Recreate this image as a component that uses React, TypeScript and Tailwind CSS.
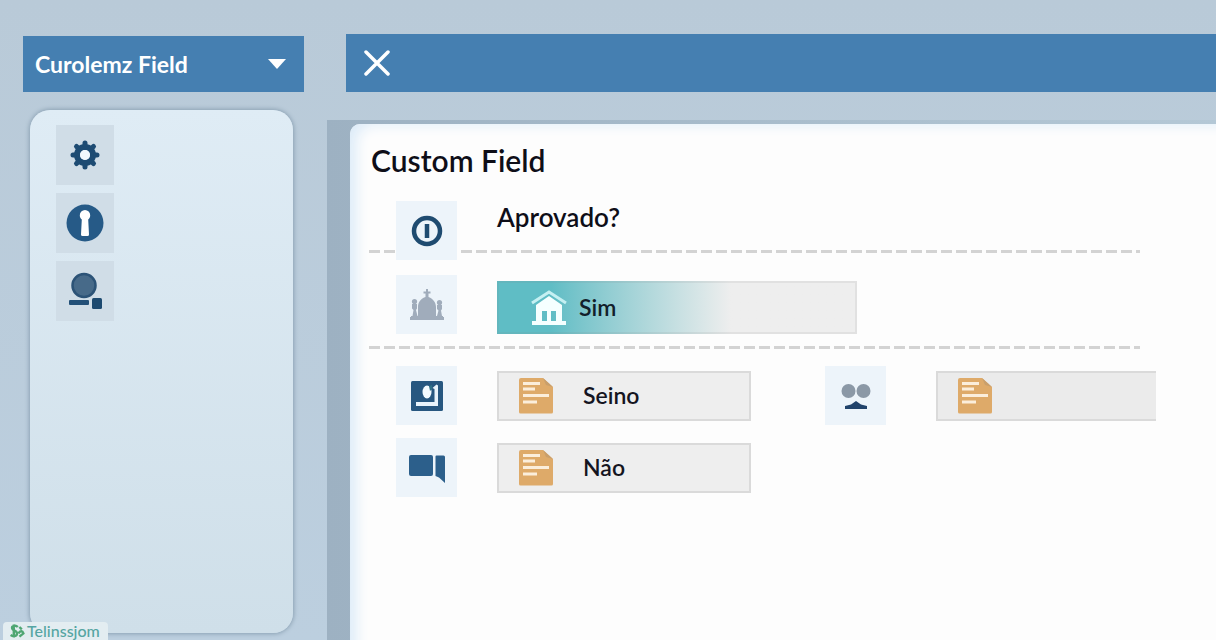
import type { ReactNode } from "react";

interface TileProps {
  label: string;
  children: ReactNode;
}

interface OptionProps {
  label: string;
}

function SideTile({ label, children }: TileProps) {
  return (
    <button
      type="button"
      aria-label={label}
      className="flex h-[60px] w-[58px] items-center justify-center bg-[#d0dde7]"
    >
      {children}
    </button>
  );
}

function Tile({ label, children }: TileProps) {
  return (
    <button
      type="button"
      aria-label={label}
      className="flex h-[59px] w-[61px] shrink-0 items-center justify-center bg-[#edf4fa]"
    >
      {children}
    </button>
  );
}

function Dashes() {
  return (
    <div className="h-[3px] bg-[repeating-linear-gradient(90deg,#d3d3d3_0_11px,transparent_11px_15px)]" />
  );
}

function GearIcon() {
  return (
    <svg viewBox="0 0 30 30" className="size-[30px]" fill="none" stroke="#1d4b73">
      <circle cx="15" cy="15" r="8" strokeWidth="6" />
      <g strokeWidth="5" strokeLinecap="round">
        <path d="M15 4.500V3M15 25.500V27M4.500 15H3M25.500 15H27" />
        <path d="M7.600 7.600 6.500 6.500M22.400 7.600l1.100-1.100M7.600 22.400l-1.100 1.100M22.400 22.400l1.100 1.100" />
      </g>
      <circle cx="15" cy="15" r="5" fill="#f2f8fc" stroke="none" />
    </svg>
  );
}

function KeyholeIcon() {
  return (
    <svg viewBox="0 0 38 38" className="size-[38px]">
      <circle cx="19" cy="19" r="18.500" fill="#265a87" />
      <path
        fill="#fff"
        d="M19 6a5.200 5.200 0 0 0-5.200 5.200c0 2 .8 3.400 2 4.400l-.8 14.900a1.500 1.500 0 0 0 1.500 1.500h5a1.500 1.500 0 0 0 1.500-1.500l-.8-14.900c1.200-1 2-2.400 2-4.400A5.200 5.200 0 0 0 19 6Z"
      />
    </svg>
  );
}

function UserIcon() {
  return (
    <svg viewBox="0 0 34 38" className="h-[38px] w-[34px]">
      <circle cx="16" cy="13.500" r="11.500" fill="#476a89" stroke="#2c5377" strokeWidth="2.500" />
      <rect x="1" y="28" width="20" height="5" rx="1" fill="#235078" />
      <rect x="24" y="26" width="10" height="11" rx="1.500" fill="#1d4a70" />
    </svg>
  );
}

function PowerIcon() {
  return (
    <svg viewBox="0 0 32 32" className="size-8" fill="none" stroke="#1f4b70">
      <circle cx="16" cy="16" r="13" strokeWidth="4.500" />
      <path d="M16 9v14" strokeWidth="4.500" />
    </svg>
  );
}

function DomeIcon() {
  return (
    <svg viewBox="0 0 34 32" className="h-8 w-[34px]" fill="#a0acbb">
      <path d="M16 0h2v2.500h2.500v2H18.500V8c5 2 7.500 6 7.500 10v10H8V18c0-4 2-8 7.500-10V4.500H13.500v-2H16Z" />
      <circle cx="4.500" cy="12.500" r="2.600" />
      <circle cx="29.500" cy="13.500" r="2.600" />
      <path d="M2 15h5v4.500l-1 1.500 1.500 6h3v3H1v-3h1.500l1-6-1.500-1.500ZM27 16h5v4l-1 1.500 1 5.500H33v3h-9v-3h3l1.500-5.500-1.500-1.500Z" />
      <path d="M0 28h34v3H0Z" />
    </svg>
  );
}

function PictureIcon() {
  return (
    <svg viewBox="0 0 32 30" className="h-[30px] w-8">
      <rect width="32" height="30" rx="1.500" fill="#275780" />
      <path d="M5 21h18.500V8l-2-1 4-3.500 1.500 1V25H5Z" fill="#e8f3fb" />
      <ellipse cx="16" cy="11" rx="4.500" ry="6.500" fill="#f4fbff" />
      <path d="m18 5 3-1v4l-2 2Z" fill="#2f7186" />
    </svg>
  );
}

function ChatIcon() {
  return (
    <svg viewBox="0 0 38 30" className="h-[30px] w-[38px]" fill="#2c5f8b">
      <rect x="1" y="2" width="24" height="21" rx="2" />
      <path d="M28.500 2.500h7a1.500 1.500 0 0 1 1.500 1.500v26l-6-5.500-3.500-1.500V3.500a1 1 0 0 1 1-1Z" />
    </svg>
  );
}

function FaceIcon() {
  return (
    <svg viewBox="0 0 30 28" className="h-7 w-[30px]">
      <circle cx="7.500" cy="9" r="7" fill="#8b98a6" />
      <circle cx="22.500" cy="9" r="7" fill="#8b98a6" />
      <path d="M4 27v-3l6-1.500 5-3.500 5 3.500 6 1.500v3Z" fill="#21436b" />
    </svg>
  );
}

function HouseIcon() {
  return (
    <svg viewBox="0 0 36 36" className="size-9 shrink-0">
      <path d="M1 13 18 2l17 11" fill="none" stroke="#c5f0f2" strokeWidth="3" />
      <path
        fill="#f5ffff"
        fillRule="evenodd"
        d="M5 15 18 6l13 9v16h4v4H1v-4h4Zm6 6v10h5V21Zm9 0v10h5V21Z"
      />
    </svg>
  );
}

function NoteIcon() {
  return (
    <svg viewBox="0 0 34 36" className="h-9 w-[34px] shrink-0">
      <path d="M2 0h22l10 9v25a1.500 1.500 0 0 1-1.500 1.500h-31A1.500 1.500 0 0 1 0 34V2a2 2 0 0 1 2-2Z" fill="#deaa69" />
      <path d="m24 0 10 9-7-2Z" fill="#c99f6b" />
      <path d="M4 5.500h17M4 11h12M4 17.500h26M4 24h14" stroke="#fbeedb" strokeWidth="3" />
    </svg>
  );
}

function NoteOption({ label }: OptionProps) {
  return (
    <button
      type="button"
      className="flex h-[50px] w-[254px] items-center gap-[30px] border-2 border-[#dadada] bg-[#eeeeee] pl-5 text-[23px] font-semibold text-[#15151f]"
    >
      <NoteIcon />
      {label}
    </button>
  );
}

export default function App() {
  return (
    <div className="relative flex min-h-screen overflow-hidden bg-linear-to-b from-[#b9cad8] to-[#bccfdf] font-['Lato',sans-serif]">
      <aside className="flex w-[304px] shrink-0 flex-col pt-9 pb-[7px] pl-[23px]">
        <div className="relative h-14">
          <select
            aria-label="Field type"
            className="h-full w-full appearance-none bg-[#457fb1] px-3 text-[23px] font-bold text-white"
          >
            <option>Curolemz Field</option>
          </select>
          <svg viewBox="0 0 18 10" className="pointer-events-none absolute top-[23px] right-[18px] h-[10px] w-[18px]">
            <path d="M0 0h18L9 10Z" fill="#fff" />
          </svg>
        </div>
        <nav className="mt-[18px] mr-[11px] ml-[7px] flex flex-1 flex-col gap-2 rounded-[20px] bg-linear-to-b from-[#dfecf5] to-[#cfdfe9] pt-[15px] pl-[26px] shadow-[0_0_4px_1px_#8ba1b3]">
          <SideTile label="Settings">
            <GearIcon />
          </SideTile>
          <SideTile label="Access">
            <KeyholeIcon />
          </SideTile>
          <SideTile label="User">
            <UserIcon />
          </SideTile>
        </nav>
      </aside>

      <main className="ml-[23px] flex min-w-0 flex-1 flex-col pt-[34px]">
        <header className="ml-[19px] flex h-[58px] items-center bg-[#457fb1] pl-[18px]">
          <button type="button" aria-label="Close">
            <svg viewBox="0 0 26 26" className="size-[26px]" fill="none" stroke="#fff" strokeWidth="3.500" strokeLinecap="round">
              <path d="m2 2 22 22M24 2 2 24" />
            </svg>
          </button>
        </header>

        <div className="mt-7 flex flex-1 flex-col bg-linear-to-r from-[#9db1c2] to-[#b4c8d6] pt-1 pl-[23px]">
          <section className="flex-1 rounded-tl-[10px] bg-[#fdfdfd] pt-4 pl-[19px] shadow-[inset_14px_8px_14px_-8px_#dcebf8]">
            <h1 className="pl-[2px] text-[30px] leading-10 font-semibold text-[#0e0e18]">Custom Field</h1>

            <div className="mt-[21px] mr-[76px] flex">
              <div className="w-[27px] pt-[49px]">
                <Dashes />
              </div>
              <Tile label="Power">
                <PowerIcon />
              </Tile>
              <div className="ml-1 flex-1">
                <h2 className="h-[49px] pl-9 text-[26px] leading-8 font-semibold text-[#0e0e18]">Aprovado?</h2>
                <Dashes />
              </div>
            </div>

            <div className="mt-[15px] flex items-end gap-10 pl-[27px]">
              <Tile label="Institution">
                <DomeIcon />
              </Tile>
              <button
                type="button"
                className="flex h-[53px] w-[360px] items-center gap-3 border-2 border-[#8080801f] bg-linear-to-r from-[#5fbdc5] from-15% to-[#eeeeee] to-65% bg-origin-border pl-8 text-[23px] font-semibold text-[#12202a]"
              >
                <HouseIcon />
                Sim
              </button>
            </div>

            <div className="mt-3 mr-[76px]">
              <Dashes />
            </div>

            <div className="mt-[17px] mr-[60px] flex items-center pl-[27px]">
              <Tile label="Picture">
                <PictureIcon />
              </Tile>
              <div className="mr-[74px] ml-10">
                <NoteOption label="Seino" />
              </div>
              <Tile label="People">
                <FaceIcon />
              </Tile>
              <label className="ml-[50px] flex h-[50px] min-w-0 flex-1 items-center border-2 border-r-0 border-[#dadada] bg-[#ebebeb] pl-5">
                <NoteIcon />
                <input type="text" aria-label="Note" className="ml-3 min-w-0 flex-1 bg-transparent text-[23px] outline-none" />
              </label>
            </div>

            <div className="mt-[13px] flex items-center gap-10 pl-[27px]">
              <Tile label="Comments">
                <ChatIcon />
              </Tile>
              <NoteOption label="Não" />
            </div>
          </section>
        </div>
      </main>

      <div className="absolute bottom-0 left-[3px] flex h-[18px] w-[105px] items-center rounded-t-[4px] bg-[#e3edf1] pl-1 text-base leading-4 font-medium text-[#55a5a2]">
        <svg viewBox="0 0 20 20" className="h-4 w-5 shrink-0" fill="none" stroke="#4fa673" strokeWidth="3">
          <path d="M11 5C8 2 3 4 4 7s6 2 6 6-5 4-8 2M6 2v16M13 5l3 3M12 13c2-4 5-3 6 0l-5 4" />
        </svg>
        Telinssjom
      </div>
    </div>
  );
}
